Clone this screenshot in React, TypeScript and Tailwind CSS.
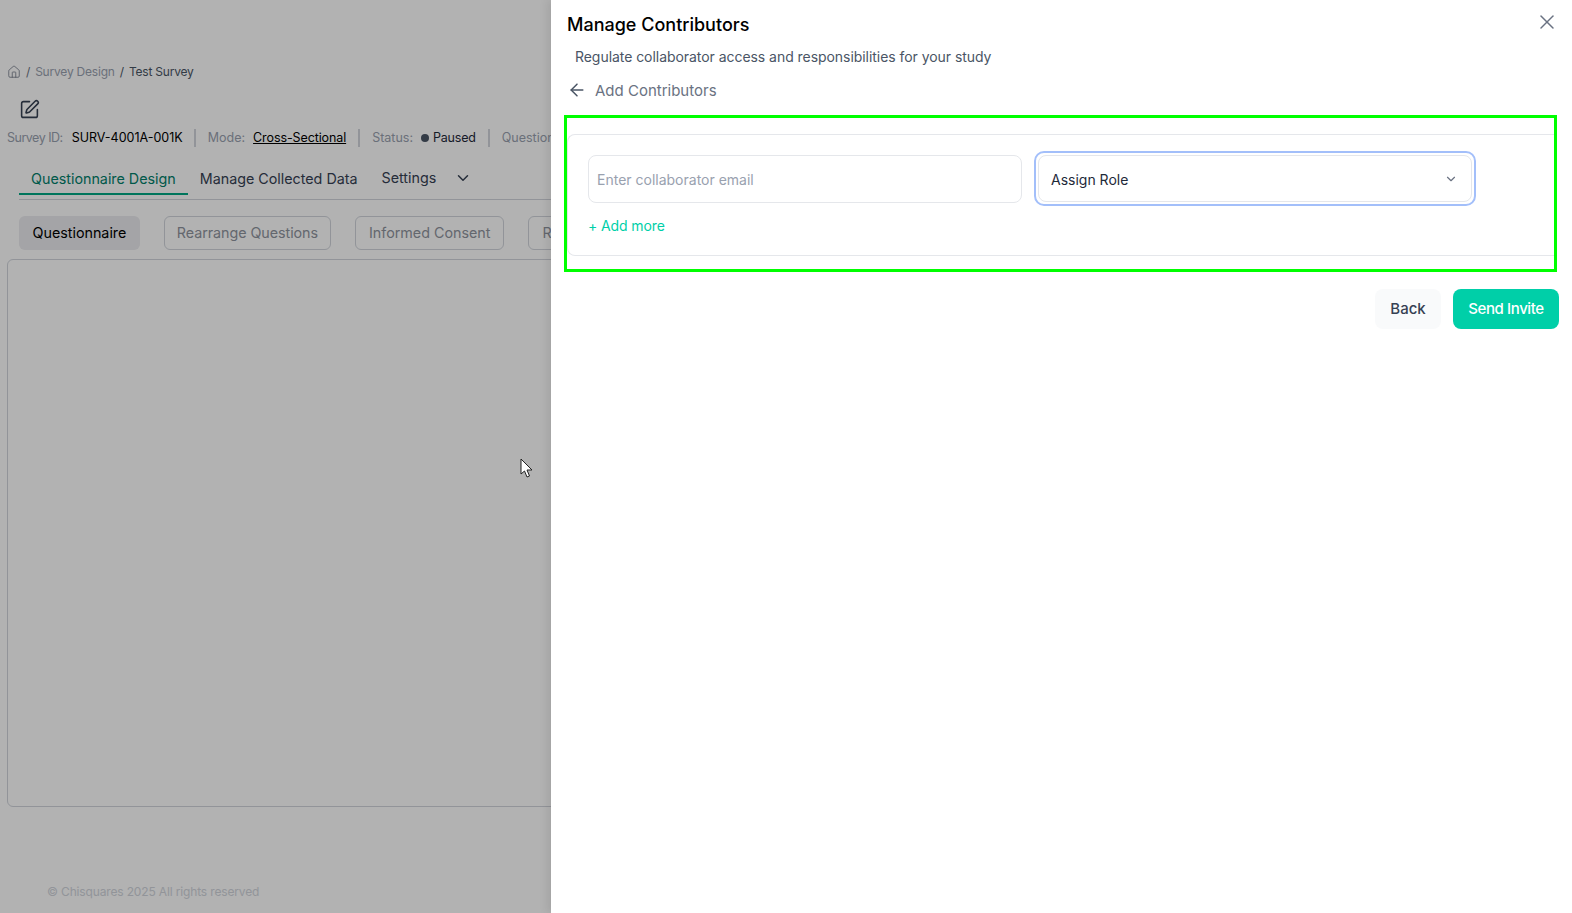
import { ArrowLeft, ChevronDown, House, SquarePen, X } from "lucide-react";

const font = "font-['Inter','Noto_Sans',sans-serif]";

const Background = () => (
    <div className="flex h-[913px] flex-col">
        <div className="flex items-center gap-[5px] pl-[7px] pt-[63px] text-[12px] leading-[18px] tracking-[-0.2px]">
            <House size={14} strokeWidth={1.3} className="text-gray-500" />
            <span className="text-gray-500">/</span>
            <span className="text-gray-400">Survey Design</span>
            <span className="text-gray-600">/</span>
            <span className="text-gray-600">Test Survey</span>
        </div>
        <div className="pl-[19px] pt-[18px]">
            <SquarePen size={21} strokeWidth={1.8} className="text-gray-700" />
        </div>
        <div className="flex items-center whitespace-nowrap pl-[7px] pt-[9px] text-[12.5px] leading-[18px]">
            <span className="tracking-[-0.5px] text-gray-400">Survey ID:</span>
            <span className="ml-[9px] text-black">SURV-4001A-001K</span>
            <span className="ml-[11px] mr-3 h-[18px] w-[2px] bg-gray-300" />
            <span className="text-gray-400">Mode:</span>
            <span className="ml-2 tracking-[-0.1px] text-black underline">Cross-Sectional</span>
            <span className="mx-3 h-[18px] w-[2px] bg-gray-300" />
            <span className="text-gray-400">Status:</span>
            <span className="ml-2 h-2 w-2 rounded-full bg-gray-600" />
            <span className="ml-1 tracking-[-0.2px] text-gray-800">Paused</span>
            <span className="mx-3 h-[18px] w-[2px] bg-gray-300" />
            <span className="text-gray-400">Questions</span>
        </div>
        <div className="ml-[19px] mt-[17px] flex items-end border-b border-gray-300 text-[14.3px] leading-5">
            <span className="mb-1 border-b-2 border-[#00a884] px-3 pb-1 pt-1 text-[#00806a]">Questionnaire Design</span>
            <span className="px-3 pb-[10px] pt-1 text-gray-700">Manage Collected Data</span>
            <span className="flex items-center gap-[18px] px-3 pb-[11px] pt-1 text-gray-700">
                Settings
                <ChevronDown size={18} />
            </span>
        </div>
        <div className="ml-[19px] mt-4 flex gap-6 whitespace-nowrap text-[14.3px] leading-5">
            <span className="rounded-md border border-transparent bg-[#ebebef] px-[12.5px] py-[6px] text-black">Questionnaire</span>
            <span className="rounded-md border border-gray-300 px-3 py-[6px] tracking-[-0.05px] text-[#8f949e]">Rearrange Questions</span>
            <span className="rounded-md border border-gray-300 px-[13px] py-[6px] text-[#8f949e]">Informed Consent</span>
            <span className="rounded-md border border-gray-300 px-[13px] py-[6px] text-[#8f949e]">Reports</span>
        </div>
        <div className="ml-[7px] mt-[9px] h-[548px] rounded-md border border-gray-300" />
        <div className="pl-[47px] pt-[76px] text-[12px] leading-[18px] tracking-[-0.15px] text-gray-300">© Chisquares 2025 All rights reserved</div>
    </div>
);

const Drawer = () => (
    <div className="absolute inset-y-0 right-0 flex w-[1021px] flex-col bg-white pl-[13px] pr-[13px] shadow-[-4px_0_8px_rgba(0,0,0,0.08)]">
        <div className="flex items-start justify-between pl-[3px] pt-[14px]">
            <h2 className="text-[18px] font-medium leading-[22px] text-black">Manage Contributors</h2>
            <X size={24} strokeWidth={1.5} className="-mt-1 text-gray-500" />
        </div>
        <p className="pl-[11px] pt-[11px] text-[14px] leading-5 tracking-[-0.05px] text-gray-600">Regulate collaborator access and responsibilities for your study</p>
        <div className="flex items-center gap-2 pl-[3px] pt-[14px] text-[15px] leading-5 text-gray-500">
            <ArrowLeft size={20} strokeWidth={1.8} className="-mt-[2px] text-gray-600" />
            Add Contributors
        </div>
        <div className="mr-[2px] mt-[14px] border-[3px] border-[#00ff00] pb-[13px] pt-4">
            <div className="h-[122px] rounded-l-lg border-y border-l border-gray-200 pl-5 pt-4">
                <div className="flex items-center gap-3">
                    <div className="flex h-12 w-[434px] items-center rounded-lg border border-gray-200 pl-2 pt-[2px] text-[14px] text-gray-400">Enter collaborator email</div>
                    <div className="flex h-[55px] w-[442px] items-center justify-between rounded-[10px] border-[2px] border-[#a3bffa] p-[2px]">
                        <div className="flex h-full w-full items-center justify-between rounded-lg border border-gray-200 pl-3 pr-[13px] pt-[2px] text-[14px] text-gray-800">
                            Assign Role
                            <ChevronDown size={14} className="-mt-[2px] text-gray-500" />
                        </div>
                    </div>
                </div>
                <div className="pt-[10px] text-[14px] leading-5 tracking-[-0.1px] text-[#00cfa8]">+ Add more</div>
            </div>
        </div>
        <div className="flex justify-end gap-3 pt-[17px] text-[15px] font-medium">
            <span className="flex h-10 w-[66px] items-center justify-center rounded-lg bg-gray-50 text-gray-700">Back</span>
            <span className="flex h-10 w-[106px] items-center justify-center rounded-lg bg-[#00cfa8] tracking-[-0.4px] text-white">Send Invite</span>
        </div>
    </div>
);

const App = () => (
    <div className={`relative h-[913px] overflow-hidden bg-white ${font}`}>
        <Background />
        <div className="absolute inset-0 bg-black/30" />
        <Drawer />
        <svg className="absolute left-[520px] top-[458px]" width="14" height="22" viewBox="0 0 14 22">
            <path d="M1 1 L1 16 L4.5 13 L7 19 L9.5 18 L7 12 L12 12 Z" fill="#fff" stroke="#222" strokeWidth="1" />
        </svg>
    </div>
);

export default App;
